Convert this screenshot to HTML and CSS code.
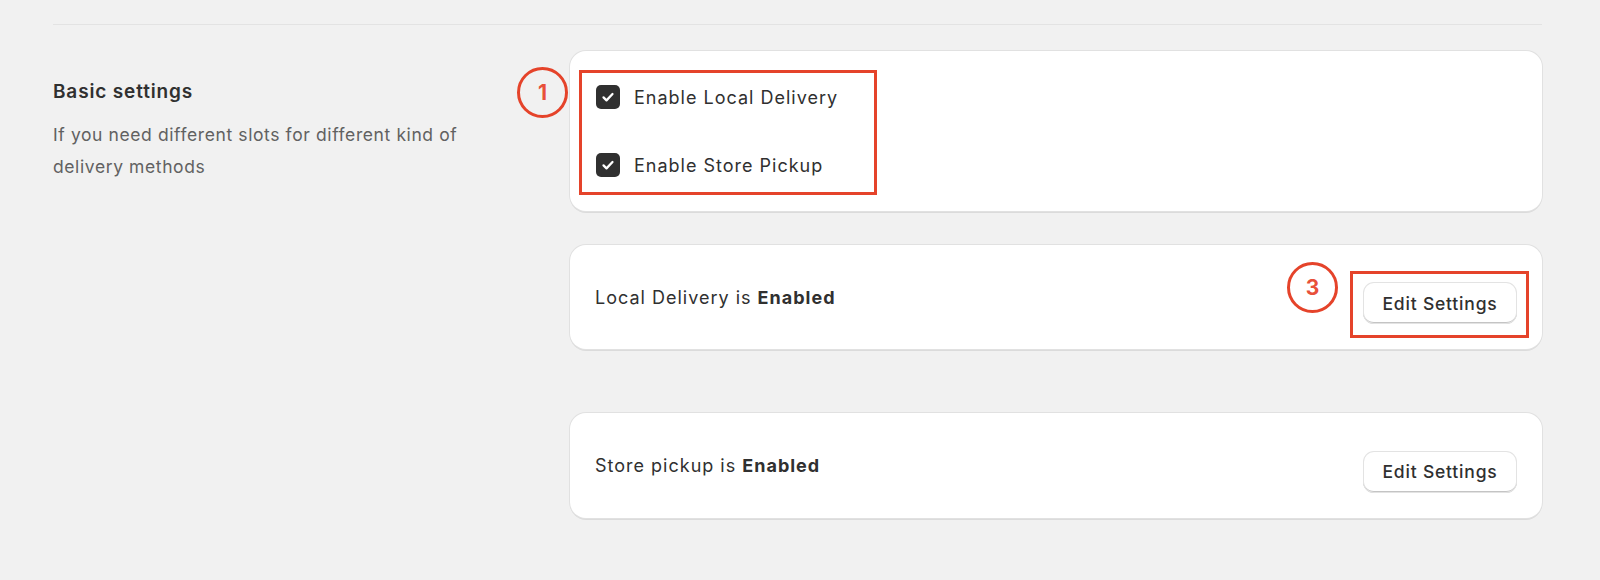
FILE: index.html
```html
<!DOCTYPE html>
<html lang="en">
<head>
<meta charset="utf-8">
<title>Basic settings</title>
<link rel="stylesheet" href="styles.css">
</head>
<body>
<div class="page">
  <hr class="divider">
  <section class="layout">
    <div class="intro">
      <h2 class="intro-title">Basic settings</h2>
      <p class="intro-text">If you need different slots for different kind of delivery methods</p>
    </div>
    <div class="cards">
      <div class="card card-options">
        <label class="check-row">
          <span class="checkbox"><svg viewBox="0 0 24 24" width="18" height="18"><path d="M6 12.5l4 4L18 8" fill="none" stroke="#fff" stroke-width="3" stroke-linecap="round" stroke-linejoin="round"/></svg></span>
          <span class="check-label">Enable Local Delivery</span>
        </label>
        <label class="check-row">
          <span class="checkbox"><svg viewBox="0 0 24 24" width="18" height="18"><path d="M6 12.5l4 4L18 8" fill="none" stroke="#fff" stroke-width="3" stroke-linecap="round" stroke-linejoin="round"/></svg></span>
          <span class="check-label">Enable Store Pickup</span>
        </label>
        <span class="mark-box mark-box-1"></span>
        <span class="mark-num mark-num-1">1</span>
      </div>
      <div class="card card-status card-local">
        <p class="status-text">Local Delivery is <strong>Enabled</strong></p>
        <button class="btn" type="button">Edit Settings</button>
        <span class="mark-box mark-box-3"></span>
        <span class="mark-num mark-num-3">3</span>
      </div>
      <div class="card card-status card-pickup">
        <p class="status-text">Store pickup is <strong>Enabled</strong></p>
        <button class="btn" type="button">Edit Settings</button>
      </div>
    </div>
  </section>
</div>
</body>
</html>
```
FILE: styles.css
```css
* { box-sizing: border-box; }
html, body { margin: 0; padding: 0; }
body {
  background: #f1f1f1;
  font-family: "Inter", "Noto Sans", sans-serif;
  color: #303030;
  width: 1600px;
  height: 580px;
  overflow: hidden;
}
.page {
  padding: 24px 58px 0 53px;
}
.divider {
  margin: 0;
  border: 0;
  height: 1px;
  background: #e3e3e3;
}
.layout {
  display: grid;
  grid-template-columns: 460px 1fr;
  column-gap: 57px;
  padding-top: 26px;
}
.intro { padding-top: 29px; }
.intro-title {
  margin: 0;
  font-size: 19px;
  font-weight: 600;
  line-height: 24px;
  letter-spacing: 0.85px;
  color: #303030;
}
.intro-text {
  margin: 15px 0 0;
  font-size: 17.5px;
  line-height: 32px;
  letter-spacing: 0.6px;
  color: #616161;
}
.cards {
  display: flex;
  flex-direction: column;
}
.card {
  position: relative;
  background: #fff;
  border-radius: 16px;
  box-shadow: 0 0 0 1px #e1e1e1, 0 2px 0 0 rgba(0,0,0,0.09);
}
.card-options {
  height: 160px;
  padding: 34px 0 0 26px;
  display: flex;
  flex-direction: column;
  gap: 44px;
}
.check-row {
  display: flex;
  align-items: center;
  gap: 14px;
  height: 24px;
}
.checkbox {
  flex: none;
  width: 24px;
  height: 24px;
  border-radius: 5px;
  background: #303030;
  display: flex;
  align-items: center;
  justify-content: center;
}
.check-label {
  font-size: 18px;
  letter-spacing: 1px;
  color: #303030;
}
.card-status {
  display: flex;
  align-items: center;
  justify-content: space-between;
  padding: 0 25px 0 25px;
}
.card-local { height: 104px; margin-top: 34px; }
.card-pickup { height: 105px; margin-top: 64px; }
.status-text {
  margin: 0;
  font-size: 18px;
  letter-spacing: 1px;
  color: #303030;
}
.status-text strong { font-weight: 700; }
.btn {
  width: 154px;
  height: 42px;
  border: 0;
  border-radius: 11px;
  background: #fff;
  font-family: inherit;
  font-size: 17.5px;
  font-weight: 500;
  letter-spacing: 0.8px;
  color: #303030;
  box-shadow: inset 0 0 0 1px #e3e3e3, inset 0 -2px 0 0 #c4c4c4;
  margin-top: 12px;
}
.mark-box {
  position: absolute;
  border: 3px solid #e5432a;
}
.mark-box-1 { left: 9px; top: 19px; width: 298px; height: 125px; }
.mark-box-3 { right: 13px; top: 26px; width: 179px; height: 67px; }
.mark-num {
  position: absolute;
  width: 51px;
  height: 51px;
  border: 3px solid #e5432a;
  border-radius: 50%;
  display: flex;
  align-items: center;
  justify-content: center;
  color: #e8503a;
  font-size: 21px;
  font-weight: 700;
}
.mark-num-1 { left: -53px; top: 16px; }
.mark-num-3 { right: 204px; top: 17px; }
```
